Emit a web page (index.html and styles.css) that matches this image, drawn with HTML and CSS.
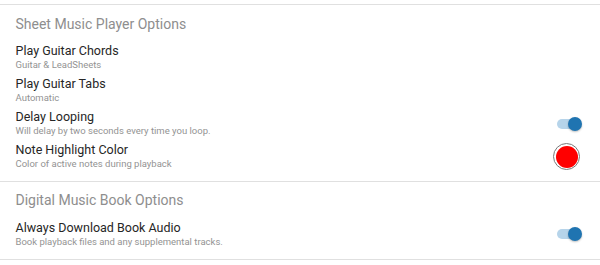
FILE: index.html
```html
<!DOCTYPE html>
<html>
<head>
<meta charset="utf-8">
<link rel="stylesheet" href="styles.css">
</head>
<body>
<div class="page">
  <section class="section">
    <div class="section-header">Sheet Music Player Options</div>
    <div class="item">
      <div class="item-text">
        <div class="item-title">Play Guitar Chords</div>
        <div class="item-sub">Guitar &amp; LeadSheets</div>
      </div>
    </div>
    <div class="item">
      <div class="item-text">
        <div class="item-title">Play Guitar Tabs</div>
        <div class="item-sub">Automatic</div>
      </div>
    </div>
    <div class="item">
      <div class="item-text">
        <div class="item-title">Delay Looping</div>
        <div class="item-sub">Will delay by two seconds every time you loop.</div>
      </div>
      <div class="toggle on"><span class="thumb"></span></div>
    </div>
    <div class="item">
      <div class="item-text">
        <div class="item-title">Note Highlight Color</div>
        <div class="item-sub">Color of active notes during playback</div>
      </div>
      <div class="swatch"><span class="swatch-fill"></span></div>
    </div>
  </section>
  <section class="section last">
    <div class="section-header">Digital Music Book Options</div>
    <div class="item">
      <div class="item-text">
        <div class="item-title">Always Download Book Audio</div>
        <div class="item-sub">Book playback files and any supplemental tracks.</div>
      </div>
      <div class="toggle on"><span class="thumb"></span></div>
    </div>
  </section>
</div>
</body>
</html>
```
FILE: styles.css
```css
* { box-sizing: border-box; }
html, body { margin: 0; padding: 0; background: #fff; }
body { font-family: Roboto, "Noto Sans", sans-serif; color: #222; }
.page { padding-top: 4px; }
.section { border-top: 1px solid #e0e0e0; padding-bottom: 7.5px; }
.section.last { border-bottom: 1px solid #e0e0e0; padding-bottom: 8.4px; }
.section-header {
  font-size: 14px;
  line-height: 20px;
  color: #8e8e8e;
  padding: 8.5px 15.5px 7.7px;
}
.item {
  display: flex;
  align-items: center;
  justify-content: space-between;
  padding: 2px 18px 2px 15.5px;
  height: 33px;
}
.item-title { font-size: 12.5px; line-height: 15px; color: #262626; }
.item-sub { font-size: 9.5px; line-height: 14px; color: #939393; }
.toggle {
  position: relative;
  width: 23px;
  height: 10px;
  border-radius: 5px;
  background: #b6d4ea;
  margin-right: 2px;
}
.toggle .thumb {
  position: absolute;
  right: -2px;
  top: -2px;
  width: 14px;
  height: 14px;
  border-radius: 50%;
  background: #1f74b1;
  box-shadow: 0 1px 2px rgba(0,0,0,0.25);
}
.swatch {
  width: 27px;
  height: 27px;
  border-radius: 50%;
  border: 1px solid #7a7a7a;
  padding: 1.5px;
  margin-right: 2px;
}
.swatch-fill {
  display: block;
  width: 100%;
  height: 100%;
  border-radius: 50%;
  background: #ff0000;
}
```
